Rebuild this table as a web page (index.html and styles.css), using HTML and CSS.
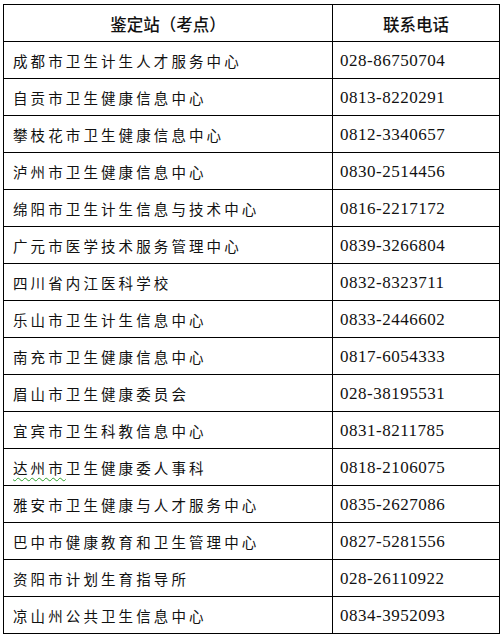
FILE: index.html
```html
<!DOCTYPE html>
<html lang="zh-CN">
<head>
<meta charset="utf-8">
<title>鉴定站联系电话</title>
<link rel="stylesheet" href="styles.css">
</head>
<body>
<div class="sheet">
  <div class="cell head">鉴定站（考点）</div>
  <div class="cell head">联系电话</div>

  <div class="cell name">成都市卫生计生人才服务中心</div>
  <div class="cell tel">028-86750704</div>

  <div class="cell name">自贡市卫生健康信息中心</div>
  <div class="cell tel">0813-8220291</div>

  <div class="cell name">攀枝花市卫生健康信息中心</div>
  <div class="cell tel">0812-3340657</div>

  <div class="cell name">泸州市卫生健康信息中心</div>
  <div class="cell tel">0830-2514456</div>

  <div class="cell name">绵阳市卫生计生信息与技术中心</div>
  <div class="cell tel">0816-2217172</div>

  <div class="cell name">广元市医学技术服务管理中心</div>
  <div class="cell tel">0839-3266804</div>

  <div class="cell name">四川省内江医科学校</div>
  <div class="cell tel">0832-8323711</div>

  <div class="cell name">乐山市卫生计生信息中心</div>
  <div class="cell tel">0833-2446602</div>

  <div class="cell name">南充市卫生健康信息中心</div>
  <div class="cell tel">0817-6054333</div>

  <div class="cell name">眉山市卫生健康委员会</div>
  <div class="cell tel">028-38195531</div>

  <div class="cell name">宜宾市卫生科教信息中心</div>
  <div class="cell tel">0831-8211785</div>

  <div class="cell name"><span class="spell">达州市</span>卫生健康委人事科</div>
  <div class="cell tel">0818-2106075</div>

  <div class="cell name">雅安市卫生健康与人才服务中心</div>
  <div class="cell tel">0835-2627086</div>

  <div class="cell name">巴中市健康教育和卫生管理中心</div>
  <div class="cell tel">0827-5281556</div>

  <div class="cell name">资阳市计划生育指导所</div>
  <div class="cell tel">028-26110922</div>

  <div class="cell name">凉山州公共卫生信息中心</div>
  <div class="cell tel">0834-3952093</div>
</div>
</body>
</html>
```

FILE: styles.css
```css
html, body {
  margin: 0;
  padding: 0;
  background: #ffffff;
}

body {
  padding: 4px 0 0 3px;
}

.sheet {
  display: grid;
  grid-template-columns: 328px 166px;
  grid-auto-rows: 36px;
  gap: 1px;
  padding: 1px;
  width: 495px;
  background: #000000;
  color: #111111;
}

.cell {
  background: #ffffff;
  display: flex;
  align-items: center;
  white-space: nowrap;
}

.head {
  justify-content: center;
  font-family: "Noto Sans CJK SC", "Noto Sans", sans-serif;
  font-size: 16.5px;
  font-weight: 500;
  padding-top: 1px;
}

.name {
  padding-left: 9px;
  padding-top: 1px;
  font-family: "Noto Sans CJK SC", "Noto Sans", sans-serif;
  font-size: 14.5px;
  letter-spacing: 3.1px;
}

.tel {
  padding-left: 7px;
  padding-top: 1px;
  font-family: "Liberation Serif", "DejaVu Serif", serif;
  font-size: 17px;
  letter-spacing: 0.5px;
}

.spell {
  text-decoration: underline wavy #2ea02e;
  text-decoration-thickness: 1px;
  text-underline-offset: 3px;
}
```
